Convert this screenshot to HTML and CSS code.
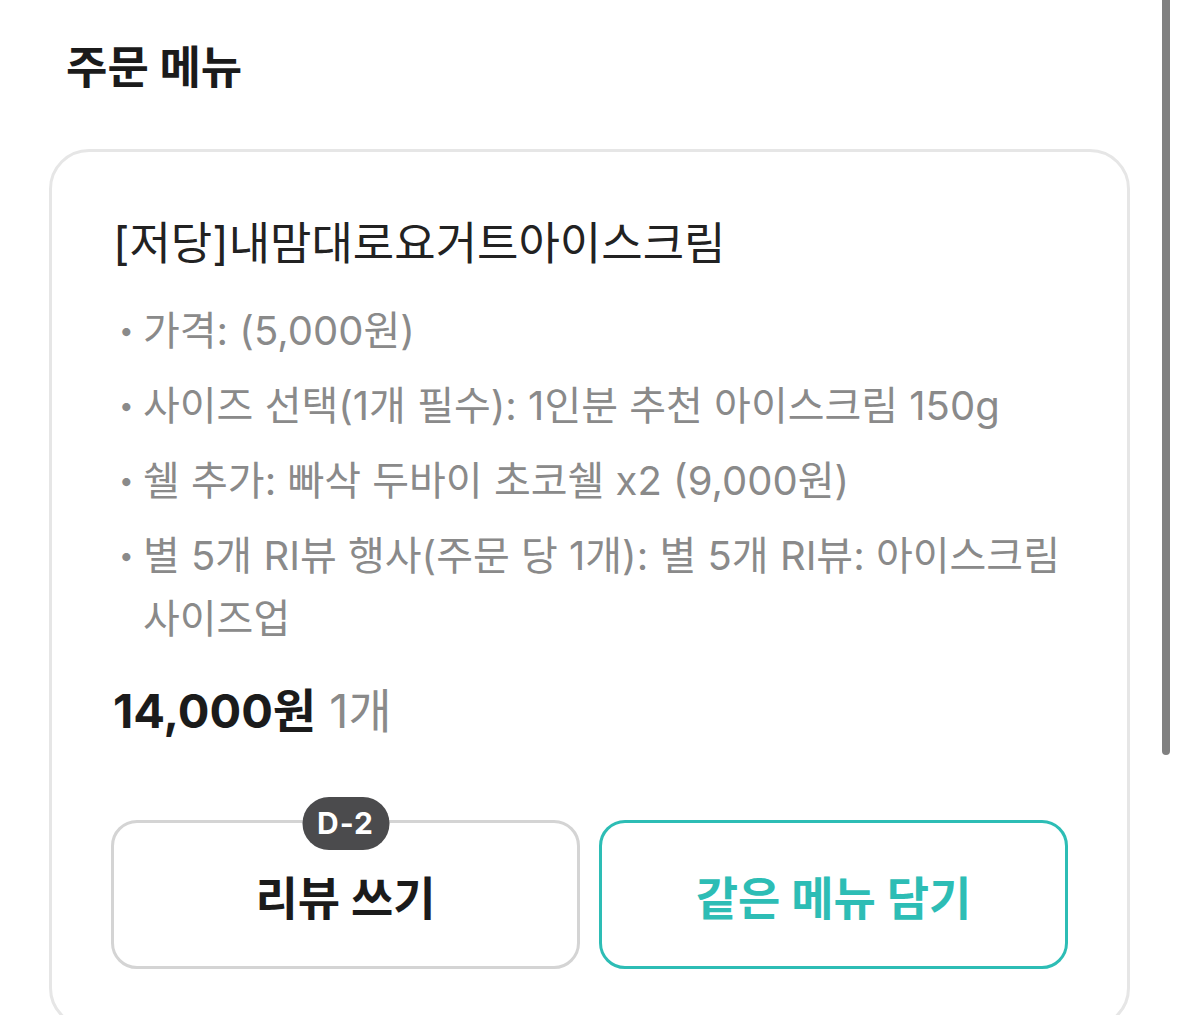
FILE: index.html
```html
<!DOCTYPE html>
<html lang="ko">
  <head>
    <meta charset="utf-8" />
    <title>주문 메뉴</title>
    <meta name="viewport" content="width=device-width, initial-scale=1.0" />
    <link rel="stylesheet" href="styles.css">
  </head>
  <body>
    <h2 class="title">주문 메뉴</h2>
    <div class="card">
      <p class="name">[저당]내맘대로요거트아이스크림</p>
      <ul class="options">
        <li>가격: (5,000원)</li>
        <li>사이즈 선택(1개 필수): 1인분 추천 아이스크림 150g</li>
        <li>쉘 추가: 빠삭 두바이 초코쉘 x2 (9,000원)</li>
        <li>별 5개 RI뷰 행사(주문 당 1개): 별 5개 RI뷰: 아이스크림 사이즈업</li>
      </ul>
      <p class="price"><b>14,000원</b> <span class="count">1개</span></p>
      <div class="actions">
        <button class="btn review">
          <span class="badge">D-2</span>
          리뷰 쓰기
        </button>
        <button class="btn again">같은 메뉴 담기</button>
      </div>
    </div>
    <div class="scrollbar"></div>
  </body>
</html>
```

FILE: styles.css
```css
body {
  margin: 0;
  height: 100vh;
  overflow: hidden;
  background: #fff;
  color: #1b1b1b;
  font-family: "Inter", "Noto Sans CJK KR", sans-serif;
  word-break: keep-all;
}
.title {
  margin: 0;
  padding: 38px 0 0 66px;
  font-size: 45px;
  line-height: 60px;
  font-weight: 700;
}
.card {
  margin: 51px 0 0 49px;
  width: 1081px;
  box-sizing: border-box;
  border: 3px solid #e6e6e6;
  border-radius: 40px;
  padding: 64px 59px 56px;
}
.name {
  margin: 0 0 0 2px;
  font-size: 45px;
  line-height: 56px;
  color: #222;
}
.options {
  list-style: none;
  margin: 27px 0 0;
  padding: 0;
  color: #8a8a8a;
  font-size: 40px;
  line-height: 63px;
}
.options li {
  padding-left: 32px;
  margin-bottom: 12px;
}
.options li:last-child {
  margin-bottom: 0;
}
.options li::before {
  content: "•";
  display: inline-block;
  width: 20px;
  margin-left: -24px;
  margin-right: 4px;
  font-size: 26px;
  vertical-align: top;
}
.price {
  margin: 33px 0 0 2px;
  font-size: 47px;
  line-height: 56px;
}
.price b {
  font-weight: 700;
  color: #1b1b1b;
}
.count {
  color: #8a8a8a;
}
.actions {
  margin-top: 81px;
  display: grid;
  grid-template-columns: 1fr 1fr;
  gap: 19px;
}
.btn {
  position: relative;
  height: 149px;
  border: 3px solid #d4d4d4;
  border-radius: 26px;
  background: #fff;
  font-family: inherit;
  font-size: 46px;
  font-weight: 700;
  color: #1b1b1b;
}
.again {
  border-color: #2dbdb5;
  color: #2dbdb5;
}
.badge {
  position: absolute;
  top: -26px;
  left: 50%;
  transform: translateX(-50%);
  width: 87px;
  height: 53px;
  border-radius: 27px;
  background: #4b4b4d;
  color: #fff;
  font-size: 30px;
  line-height: 53px;
  letter-spacing: 1px;
}
.scrollbar {
  position: fixed;
  top: -10px;
  right: 9px;
  width: 8px;
  height: 765px;
  border-radius: 4px;
  background: #808080;
}
```
